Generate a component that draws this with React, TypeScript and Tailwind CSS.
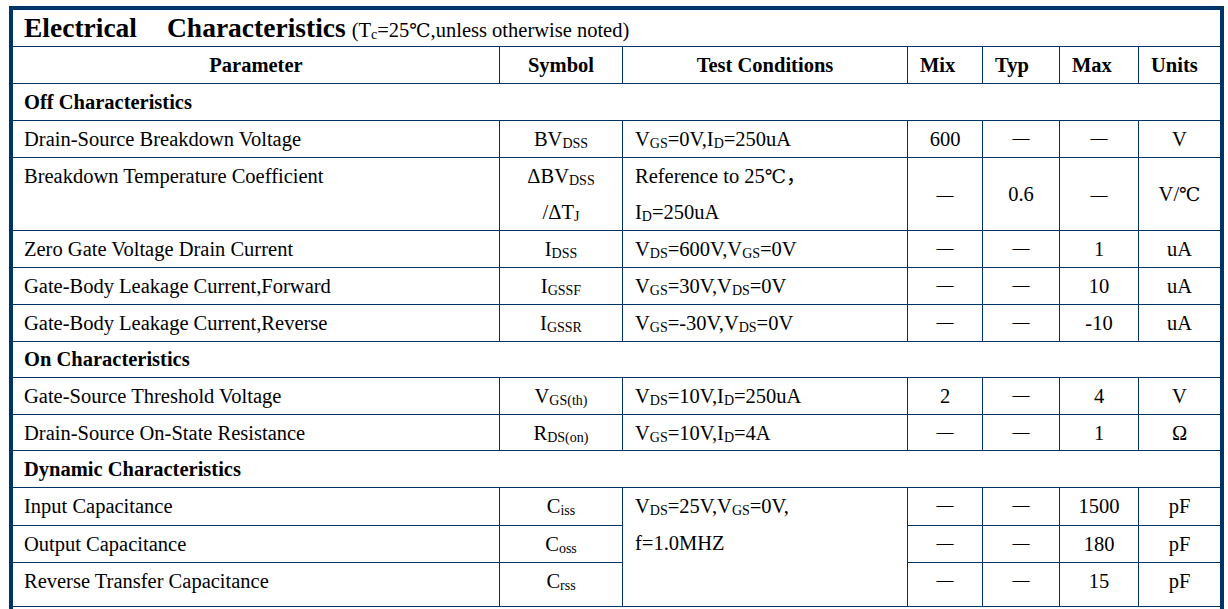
import type { FC, ReactNode } from "react";

const Sub: FC<{ children: ReactNode }> = ({ children }) => (
  <span className="align-[-2px] text-[14px] leading-none">{children}</span>
);

const Dash = () => <span className="align-[3px] text-[17px] leading-none">—</span>;

const Deg = () => <span className="font-['DejaVu_Serif','Noto_Sans_CJK_SC',serif] text-[19px]">℃</span>;

const HeadCell: FC<{ children: ReactNode; first?: boolean; left?: boolean }> = ({
  children,
  first,
  left,
}) => (
  <div
    className={`flex items-center border-b border-[#003366] font-bold ${
      first ? "" : "border-l"
    } ${left ? "justify-start pl-[12px]" : "justify-center"}`}
  >
    {children}
  </div>
);

const Section: FC<{ title: string }> = ({ title }) => (
  <div className="col-span-7 flex items-center border-b border-[#003366] pl-[11px] font-bold">
    {title}
  </div>
);

type RowData = {
  param: string;
  symbol: ReactNode;
  test: ReactNode;
  mix: ReactNode;
  typ: ReactNode;
  max: ReactNode;
  units: ReactNode;
  center?: boolean;
};

const ValueCell: FC<{ children: ReactNode; center?: boolean }> = ({ children, center }) => (
  <div
    className={`border-b border-l border-[#003366] text-center ${
      center ? "flex items-center justify-center" : "leading-[36px]"
    }`}
  >
    {children}
  </div>
);

const DataRow: FC<{ row: RowData; noTest?: boolean }> = ({ row, noTest }) => (
  <>
    <div className="border-b border-[#003366] pl-[11px] leading-[36px]">{row.param}</div>
    <div className="border-b border-l border-[#003366] text-center leading-[36px]">{row.symbol}</div>
    {!noTest && (
      <div className="border-b border-l border-[#003366] pl-[12px] leading-[36px]">{row.test}</div>
    )}
    <ValueCell center={row.center}>{row.mix}</ValueCell>
    <ValueCell center={row.center}>{row.typ}</ValueCell>
    <ValueCell center={row.center}>{row.max}</ValueCell>
    <ValueCell center={row.center}>{row.units}</ValueCell>
  </>
);

const offRows: RowData[] = [
  {
    param: "Drain-Source Breakdown Voltage",
    symbol: (
      <>
        BV<Sub>DSS</Sub>
      </>
    ),
    test: (
      <>
        V<Sub>GS</Sub>=0V,I<Sub>D</Sub>=250uA
      </>
    ),
    mix: "600",
    typ: <Dash />,
    max: <Dash />,
    units: "V",
  },
  {
    param: "Breakdown Temperature Coefficient",
    symbol: (
      <>
        ΔBV<Sub>DSS</Sub>
        <br />
        /ΔT<Sub>J</Sub>
      </>
    ),
    test: (
      <>
        Reference to 25<Deg />，
        <br />
        I<Sub>D</Sub>=250uA
      </>
    ),
    mix: <Dash />,
    typ: "0.6",
    max: <Dash />,
    units: (
      <>
        V/<Deg />
      </>
    ),
    center: true,
  },
  {
    param: "Zero Gate Voltage Drain Current",
    symbol: (
      <>
        I<Sub>DSS</Sub>
      </>
    ),
    test: (
      <>
        V<Sub>DS</Sub>=600V,V<Sub>GS</Sub>=0V
      </>
    ),
    mix: <Dash />,
    typ: <Dash />,
    max: "1",
    units: "uA",
  },
  {
    param: "Gate-Body Leakage Current,Forward",
    symbol: (
      <>
        I<Sub>GSSF</Sub>
      </>
    ),
    test: (
      <>
        V<Sub>GS</Sub>=30V,V<Sub>DS</Sub>=0V
      </>
    ),
    mix: <Dash />,
    typ: <Dash />,
    max: "10",
    units: "uA",
  },
  {
    param: "Gate-Body Leakage Current,Reverse",
    symbol: (
      <>
        I<Sub>GSSR</Sub>
      </>
    ),
    test: (
      <>
        V<Sub>GS</Sub>=-30V,V<Sub>DS</Sub>=0V
      </>
    ),
    mix: <Dash />,
    typ: <Dash />,
    max: "-10",
    units: "uA",
  },
];

const onRows: RowData[] = [
  {
    param: "Gate-Source Threshold Voltage",
    symbol: (
      <>
        V<Sub>GS(th)</Sub>
      </>
    ),
    test: (
      <>
        V<Sub>DS</Sub>=10V,I<Sub>D</Sub>=250uA
      </>
    ),
    mix: "2",
    typ: <Dash />,
    max: "4",
    units: "V",
  },
  {
    param: "Drain-Source On-State Resistance",
    symbol: (
      <>
        R<Sub>DS(on)</Sub>
      </>
    ),
    test: (
      <>
        V<Sub>GS</Sub>=10V,I<Sub>D</Sub>=4A
      </>
    ),
    mix: <Dash />,
    typ: <Dash />,
    max: "1",
    units: "Ω",
  },
];

const dynRows: RowData[] = [
  {
    param: "Input Capacitance",
    symbol: (
      <>
        C<Sub>iss</Sub>
      </>
    ),
    test: null,
    mix: <Dash />,
    typ: <Dash />,
    max: "1500",
    units: "pF",
  },
  {
    param: "Output Capacitance",
    symbol: (
      <>
        C<Sub>oss</Sub>
      </>
    ),
    test: null,
    mix: <Dash />,
    typ: <Dash />,
    max: "180",
    units: "pF",
  },
  {
    param: "Reverse Transfer Capacitance",
    symbol: (
      <>
        C<Sub>rss</Sub>
      </>
    ),
    test: null,
    mix: <Dash />,
    typ: <Dash />,
    max: "15",
    units: "pF",
  },
];

export default function App() {
  return (
    <div className="h-[609px] w-full overflow-hidden bg-white pl-[9px] pt-[6px] font-['Liberation_Serif','Times_New_Roman','Noto_Sans_CJK_SC',serif] text-[20.5px] text-black">
      <div className="h-[603px] w-[1215px] border-x-4 border-t-4 border-[#003366]">
        <div className="grid grid-cols-[486px_123px_285px_75px_77px_79px_82px] grid-rows-[37px_37px_37px_37px_73px_37px_37px_37px_36px_37px_36px_37px_38px_37px_44px]">
          {/* title */}
          <div className="col-span-7 flex items-center gap-[30px] border-b border-[#003366] pl-[11px] whitespace-nowrap">
            <span className="text-[27.5px] font-bold">Electrical</span>
            <span className="flex items-baseline gap-[6px]">
              <span className="text-[27.5px] font-bold">Characteristics</span>
              <span>
                (T<Sub>c</Sub>=25<Deg />,unless otherwise noted)
              </span>
            </span>
          </div>

          {/* header */}
          <HeadCell first>Parameter</HeadCell>
          <HeadCell>Symbol</HeadCell>
          <HeadCell>Test Conditions</HeadCell>
          <HeadCell left>Mix</HeadCell>
          <HeadCell left>Typ</HeadCell>
          <HeadCell left>Max</HeadCell>
          <HeadCell left>Units</HeadCell>

          <Section title="Off Characteristics" />
          {offRows.map((r) => (
            <DataRow key={r.param} row={r} />
          ))}

          <Section title="On Characteristics" />
          {onRows.map((r) => (
            <DataRow key={r.param} row={r} />
          ))}

          <Section title="Dynamic Characteristics" />
          <div className="col-start-1 row-start-13 border-b border-[#003366] pl-[11px] leading-[36px]">
            {dynRows[0].param}
          </div>
          <div className="col-start-2 row-start-13 border-b border-l border-[#003366] text-center leading-[36px]">
            {dynRows[0].symbol}
          </div>
          <div className="col-start-3 row-span-3 row-start-13 border-b border-l border-[#003366] pl-[12px] leading-[37px]">
            V<Sub>DS</Sub>=25V,V<Sub>GS</Sub>=0V,
            <br />
            f=1.0MHZ
          </div>
          <div className="col-start-4 row-start-13 border-b border-l border-[#003366] text-center leading-[36px]">
            {dynRows[0].mix}
          </div>
          <div className="col-start-5 row-start-13 border-b border-l border-[#003366] text-center leading-[36px]">
            {dynRows[0].typ}
          </div>
          <div className="col-start-6 row-start-13 border-b border-l border-[#003366] text-center leading-[36px]">
            {dynRows[0].max}
          </div>
          <div className="col-start-7 row-start-13 border-b border-l border-[#003366] text-center leading-[36px]">
            {dynRows[0].units}
          </div>
          {dynRows.slice(1).map((r) => (
            <DataRow key={r.param} row={r} noTest />
          ))}
        </div>
      </div>
    </div>
  );
}
